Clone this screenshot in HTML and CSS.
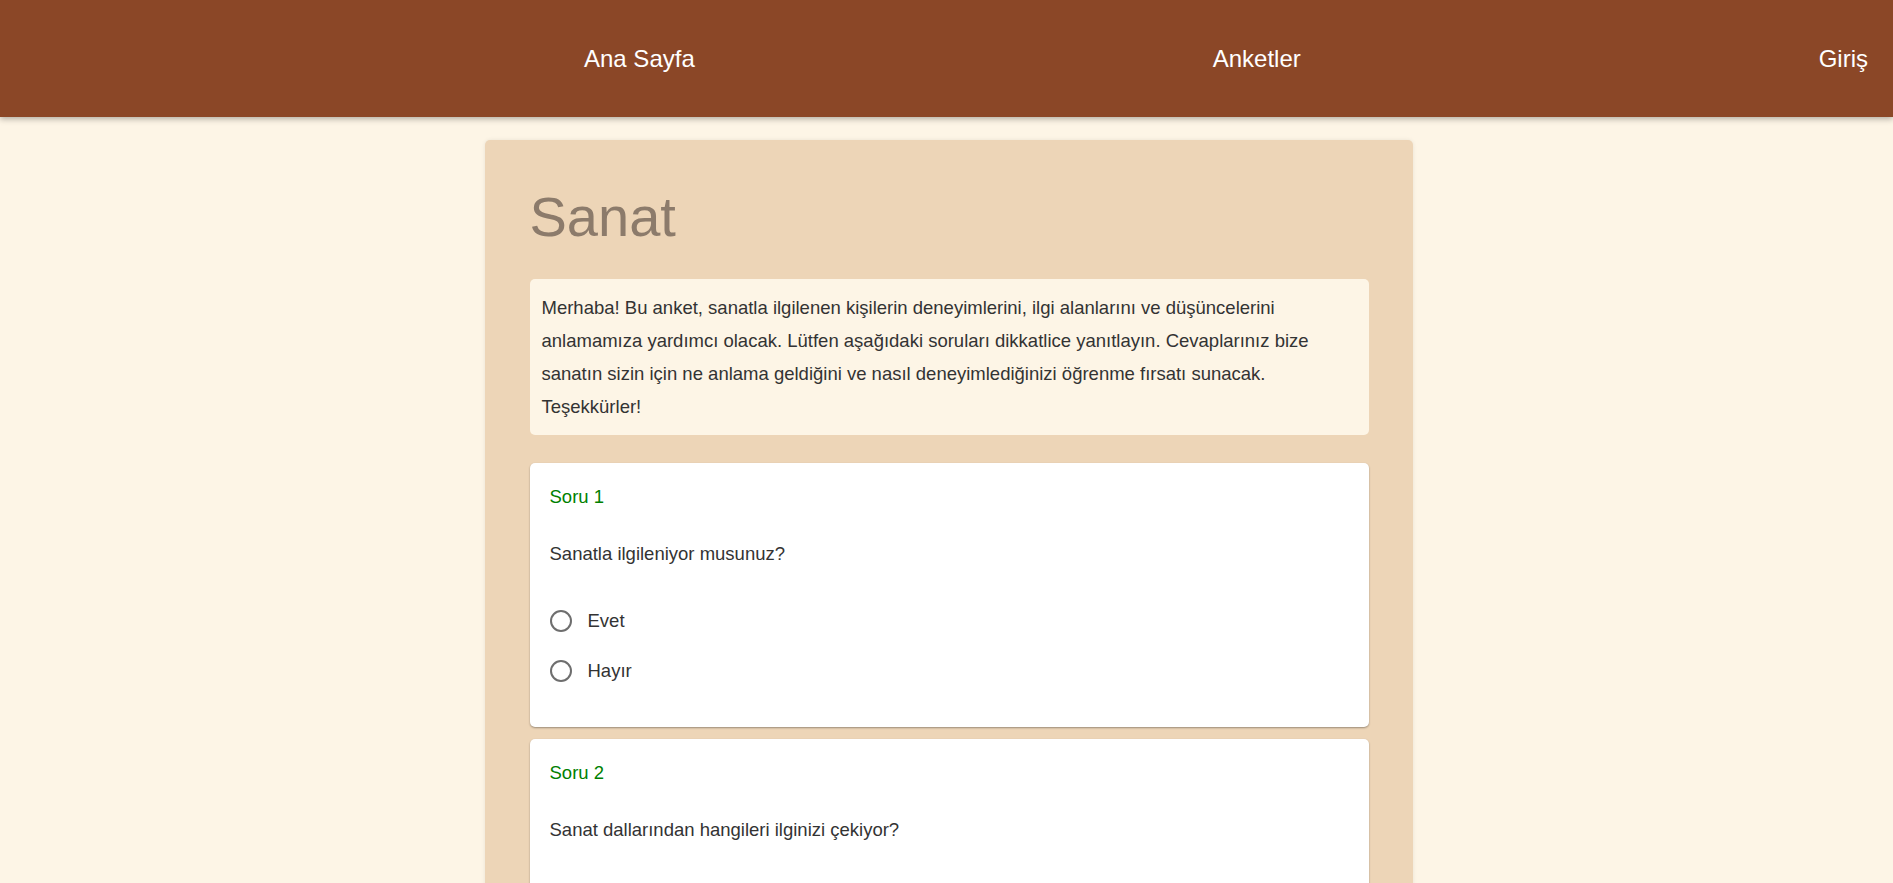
FILE: index.html
```html
<!DOCTYPE html>
<html lang="tr">
<head>
<meta charset="utf-8">
<title>Sanat Anketi</title>
<link rel="stylesheet" href="styles.css">
</head>
<body>
<header class="topbar">
  <nav class="nav">
    <a class="nav-link" href="#">Ana Sayfa</a>
    <a class="nav-link" href="#">Anketler</a>
    <a class="nav-link" href="#">Giriş</a>
  </nav>
</header>
<main class="survey">
  <h1 class="survey-title">Sanat</h1>
  <p class="survey-desc">Merhaba! Bu anket, sanatla ilgilenen kişilerin deneyimlerini, ilgi alanlarını ve düşüncelerini anlamamıza yardımcı olacak. Lütfen aşağıdaki soruları dikkatlice yanıtlayın. Cevaplarınız bize sanatın sizin için ne anlama geldiğini ve nasıl deneyimlediğinizi öğrenme fırsatı sunacak. Teşekkürler!</p>

  <section class="question">
    <div class="q-label">Soru 1</div>
    <div class="q-text">Sanatla ilgileniyor musunuz?</div>
    <div class="options">
      <label class="option"><span class="radio"></span><span class="opt-text">Evet</span></label>
      <label class="option"><span class="radio"></span><span class="opt-text">Hayır</span></label>
    </div>
  </section>

  <section class="question">
    <div class="q-label">Soru 2</div>
    <div class="q-text">Sanat dallarından hangileri ilginizi çekiyor?</div>
    <div class="options">
      <label class="option"><span class="check"></span><span class="opt-text">Resim</span></label>
      <label class="option"><span class="check"></span><span class="opt-text">Müzik</span></label>
      <label class="option"><span class="check"></span><span class="opt-text">Heykel</span></label>
    </div>
  </section>
</main>
</body>
</html>
```
FILE: styles.css
```css
html {
  scrollbar-width: none;
}
html::-webkit-scrollbar {
  display: none;
}
body {
  margin: 0;
  background: #fdf5e6;
  font-family: "Liberation Sans", Arial, sans-serif;
  color: #333;
}
.topbar {
  height: 117px;
  background: #8b4727;
  box-shadow: 0 2px 6px rgba(0, 0, 0, 0.3);
  display: flex;
  align-items: center;
}
.nav {
  display: flex;
  justify-content: space-between;
  align-items: center;
  width: 1284px;
  margin-left: auto;
  margin-right: 25px;
}
.nav-link {
  color: #fff;
  text-decoration: none;
  font-size: 24px;
  line-height: 28px;
}
.survey {
  width: 928px;
  box-sizing: border-box;
  margin: 23px auto 0;
  padding: 45px 44px 30px 45px;
  background: #edd5b7;
  border-radius: 5px;
  box-shadow: 0 0 4px rgba(0, 0, 0, 0.08);
  position: relative;
  left: 2px;
}
.survey-title {
  margin: 0 0 30px;
  font-size: 56px;
  line-height: 64px;
  font-weight: normal;
  color: #8c7b6b;
}
.survey-desc {
  margin: 0 0 28px;
  padding: 12px 12px;
  background: #fdf5e6;
  border-radius: 5px;
  font-size: 18.5px;
  line-height: 33px;
  color: #333;
}
.question {
  background: #fff;
  border-radius: 5px;
  padding: 21px 20px 36px;
  margin-bottom: 12px;
  box-shadow: 0 1px 2px rgba(0, 0, 0, 0.35);
}
.q-label {
  color: #008000;
  font-size: 18.5px;
  line-height: 26px;
}
.q-text {
  margin-top: 31px;
  font-size: 18.5px;
  line-height: 26px;
  color: #333;
}
.options {
  margin-top: 34px;
  display: flex;
  flex-direction: column;
  gap: 10px;
}
.option {
  display: flex;
  align-items: center;
  height: 40px;
  font-size: 18.5px;
  color: #333;
}
.radio {
  width: 18px;
  height: 18px;
  border: 2px solid #6e6e6e;
  border-radius: 50%;
  margin-right: 16px;
}
.check {
  width: 16px;
  height: 16px;
  border: 2px solid #6e6e6e;
  border-radius: 2px;
  margin: 0 16px 0 2px;
}
```
